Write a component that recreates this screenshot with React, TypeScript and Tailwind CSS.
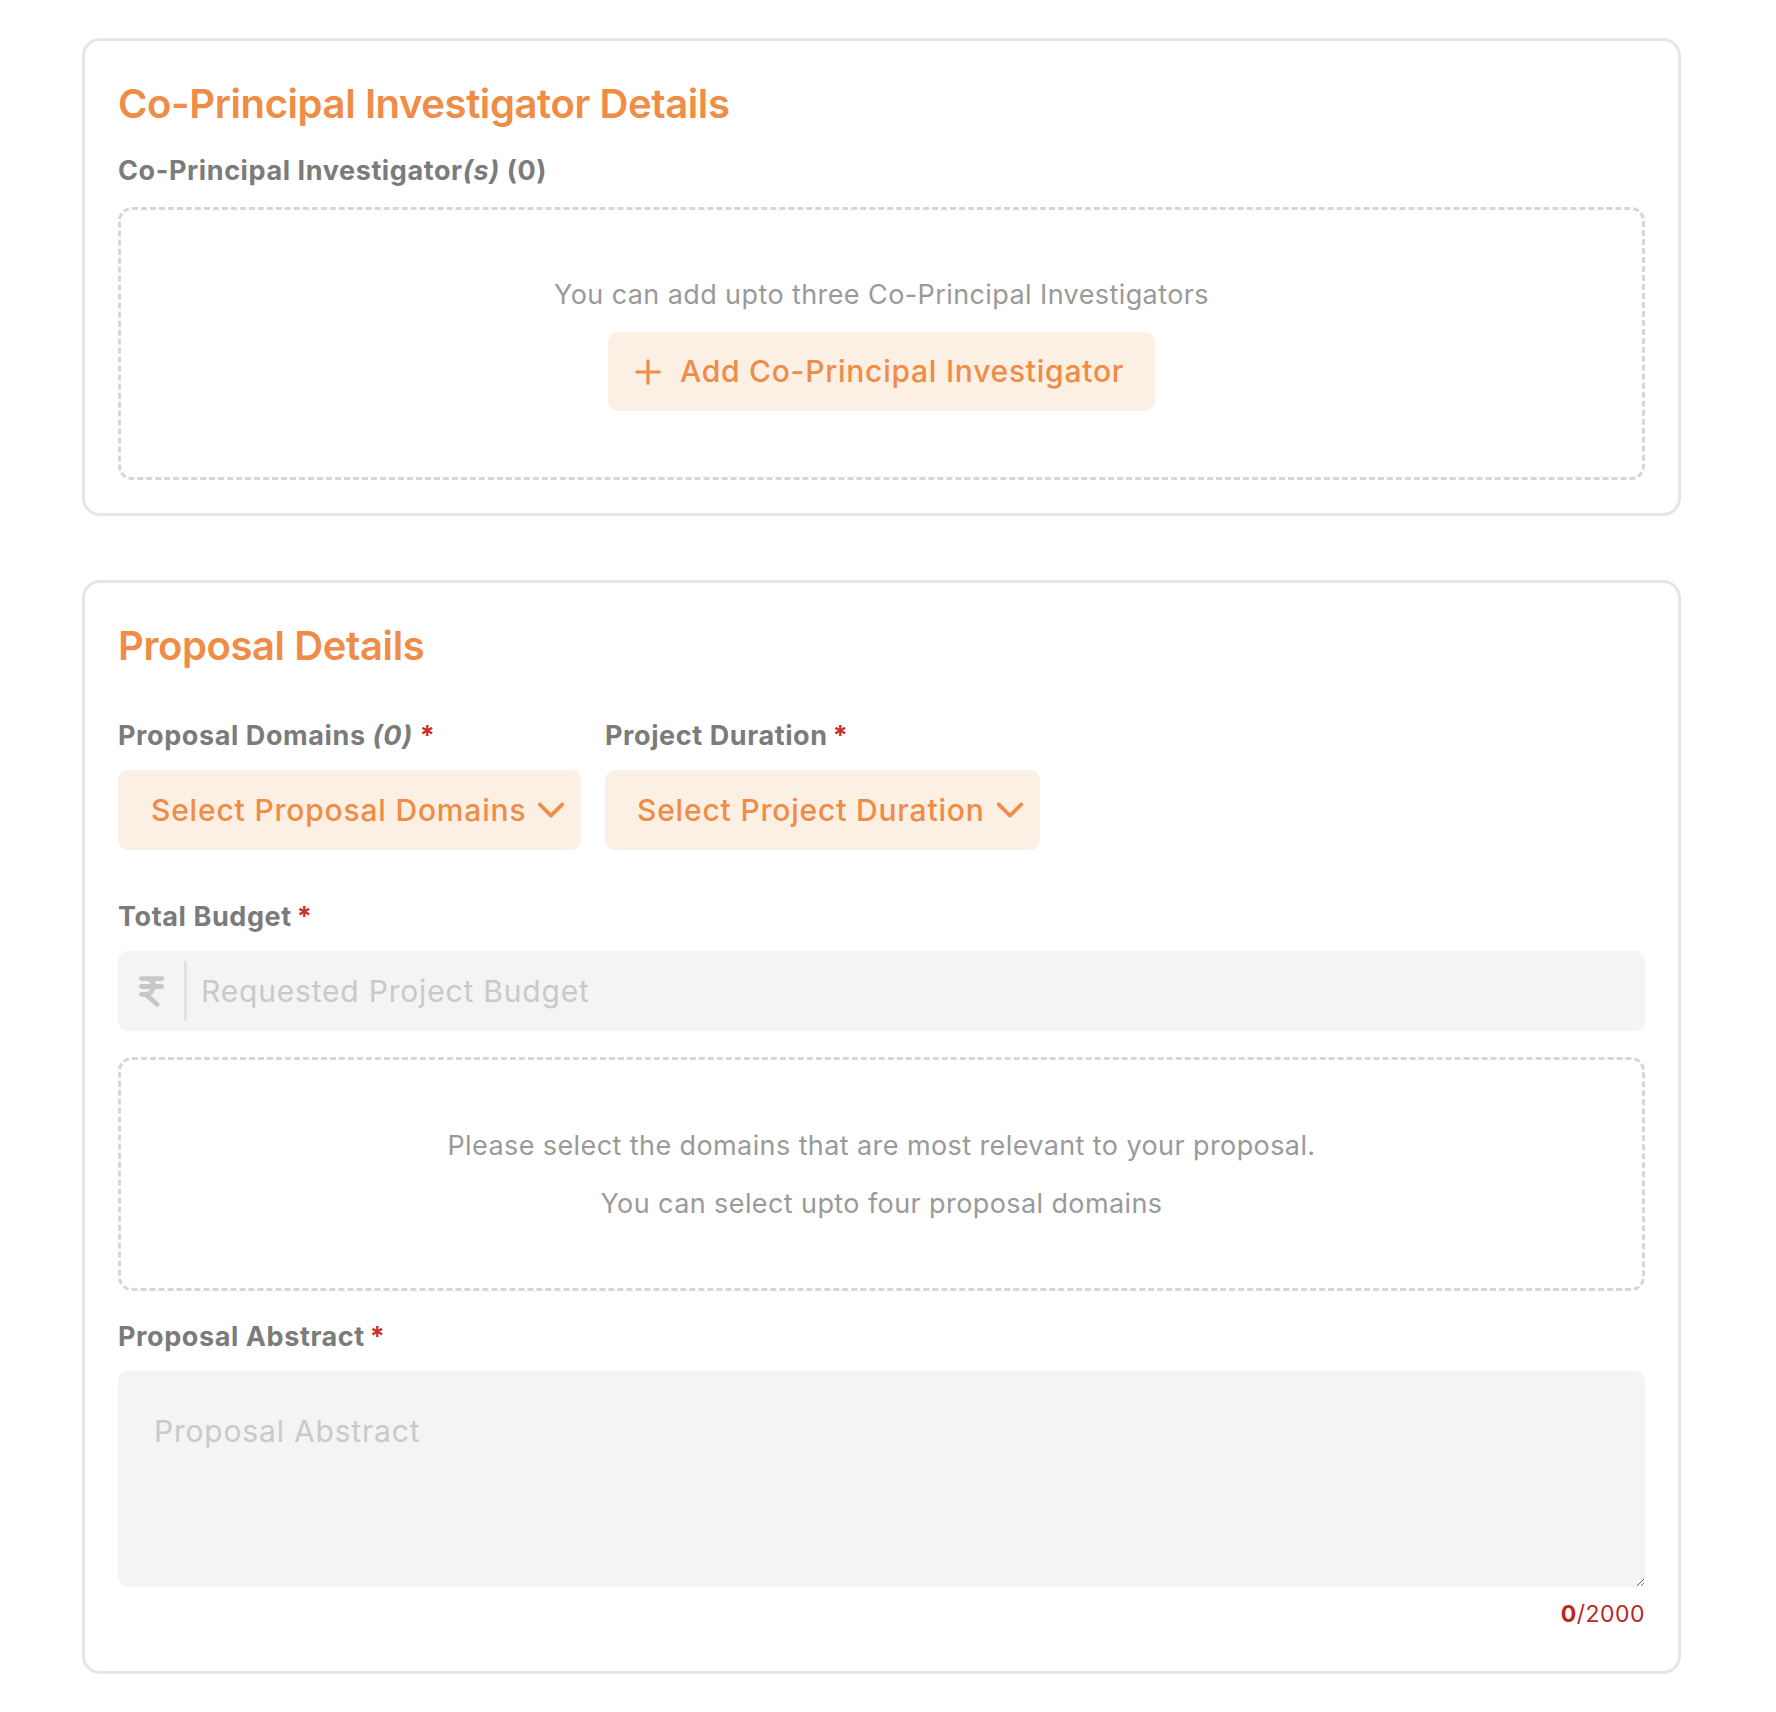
import React from "react";

function PlusIcon() {
  return (
    <svg width="30" height="30" viewBox="0 0 24 24" fill="none" stroke="currentColor" strokeWidth="2.5" strokeLinecap="round">
      <path d="M12 3v18M3 12h18" />
    </svg>
  );
}

function Chevron() {
  return (
    <svg width="30" height="30" viewBox="0 0 24 24" fill="none" stroke="currentColor" strokeWidth="2.9" strokeLinecap="round" strokeLinejoin="round">
      <path d="M3 7.5l9 9 9-9" />
    </svg>
  );
}

function Rupee() {
  return (
    <svg width="27" height="34" viewBox="0 0 24 28" fill="none" stroke="currentColor" strokeWidth="4.3" strokeLinecap="round" strokeLinejoin="round">
      <path d="M3 3h18M3 10h18M3 17h4c8 0 10-14 0-14M7 17l10 9" />
    </svg>
  );
}

function Req() {
  return <span className="text-[#c9302c] ml-[5px]">*</span>;
}

const label = "text-[27px] leading-[32px] font-bold text-[#7b7b7b] tracking-[0.022em]";

export default function App() {
  return (
    <div className="min-h-screen w-full bg-white font-['Inter',sans-serif] pt-[38px] pl-[82px] pb-[40px]">
      <section className="w-[1599px] rounded-[18px] border-[3px] border-[#e6e6e6] px-[33px] pt-[39px] pb-[33px]">
        <h2 className="text-[40px] leading-[48px] font-semibold text-[#ef8c46] tracking-[-0.01em]">
          Co-Principal Investigator Details
        </h2>
        <div className={`mt-[27px] ${label}`}>
          Co-Principal Investigator<i>(s)</i> (0)
        </div>
        <div className="mt-[20px] h-[273px] rounded-[14px] border-[3px] border-dashed border-[#d6d6d6] flex flex-col items-center pt-[69px]">
          <p className="text-[27px] leading-[32px] text-[#9a9a9a] tracking-[0.015em]">You can add upto three Co-Principal Investigators</p>
          <button className="mt-[21px] h-[79px] w-[547px] rounded-[10px] bg-[#fcefe4] flex items-center justify-center gap-[17px] pr-[6px] text-[30px] font-medium text-[#ef8c46] tracking-[0.025em]">
            <PlusIcon />
            <span>Add Co-Principal Investigator</span>
          </button>
        </div>
      </section>

      <section className="mt-[64px] w-[1599px] rounded-[18px] border-[3px] border-[#e6e6e6] px-[33px] pt-[39px] pb-[42px]">
        <h2 className="text-[40px] leading-[48px] font-semibold text-[#ef8c46] tracking-[-0.01em]">Proposal Details</h2>

        <div className="mt-[50px] flex gap-[24px]">
          <div className="flex flex-col">
            <div className={label}>
              Proposal Domains <i>(0)</i> <span className="text-[#c9302c]">*</span>
            </div>
            <button className="mt-[18px] h-[80px] w-[463px] rounded-[10px] bg-[#fcefe4] flex items-center pl-[33px] gap-[10px] text-[30px] font-medium text-[#ef8c46] tracking-[0.027em]">
              <span>Select Proposal Domains</span>
              <Chevron />
            </button>
          </div>
          <div className="flex flex-col">
            <div className={label}>
              Project Duration
              <Req />
            </div>
            <button className="mt-[18px] h-[80px] w-[435px] rounded-[10px] bg-[#fcefe4] flex items-center pl-[32px] gap-[10px] text-[30px] font-medium text-[#ef8c46] tracking-[0.027em]">
              <span>Select Project Duration</span>
              <Chevron />
            </button>
          </div>
        </div>

        <div className={`mt-[51px] ${label}`}>
          Total Budget
          <Req />
        </div>
        <div className="mt-[18px] h-[80px] rounded-[10px] bg-[#f4f4f4] flex items-center">
          <div className="w-[69px] h-[60px] flex items-center justify-center border-r-[3px] border-[#e2e2e2] text-[#c8c8c8]">
            <Rupee />
          </div>
          <input
            className="flex-1 h-full bg-transparent outline-none pl-[14px] text-[30px] tracking-[0.027em] placeholder:text-[#c9c9c9]"
            placeholder="Requested Project Budget"
          />
        </div>

        <div className="mt-[26px] h-[234px] rounded-[14px] border-[3px] border-dashed border-[#d6d6d6] flex flex-col items-center pt-[70px] gap-[26px] text-[27px] leading-[32px] text-[#9a9a9a] tracking-[0.015em]">
          <p>Please select the domains that are most relevant to your proposal.</p>
          <p>You can select upto four proposal domains</p>
        </div>

        <div className={`mt-[30px] ${label}`}>
          Proposal Abstract
          <Req />
        </div>
        <textarea
          className="mt-[18px] block w-full h-[216px] rounded-[10px] bg-[#f4f4f4] outline-none px-[36px] pt-[40px] text-[30px] leading-[40px] tracking-[0.027em] placeholder:text-[#c9c9c9]"
          placeholder="Proposal Abstract"
        />
        <div className="mt-[12px] text-right text-[23px] leading-[30px] text-[#b8281e] tracking-[0.02em]">
          <b>0</b>/2000
        </div>
      </section>
    </div>
  );
}
